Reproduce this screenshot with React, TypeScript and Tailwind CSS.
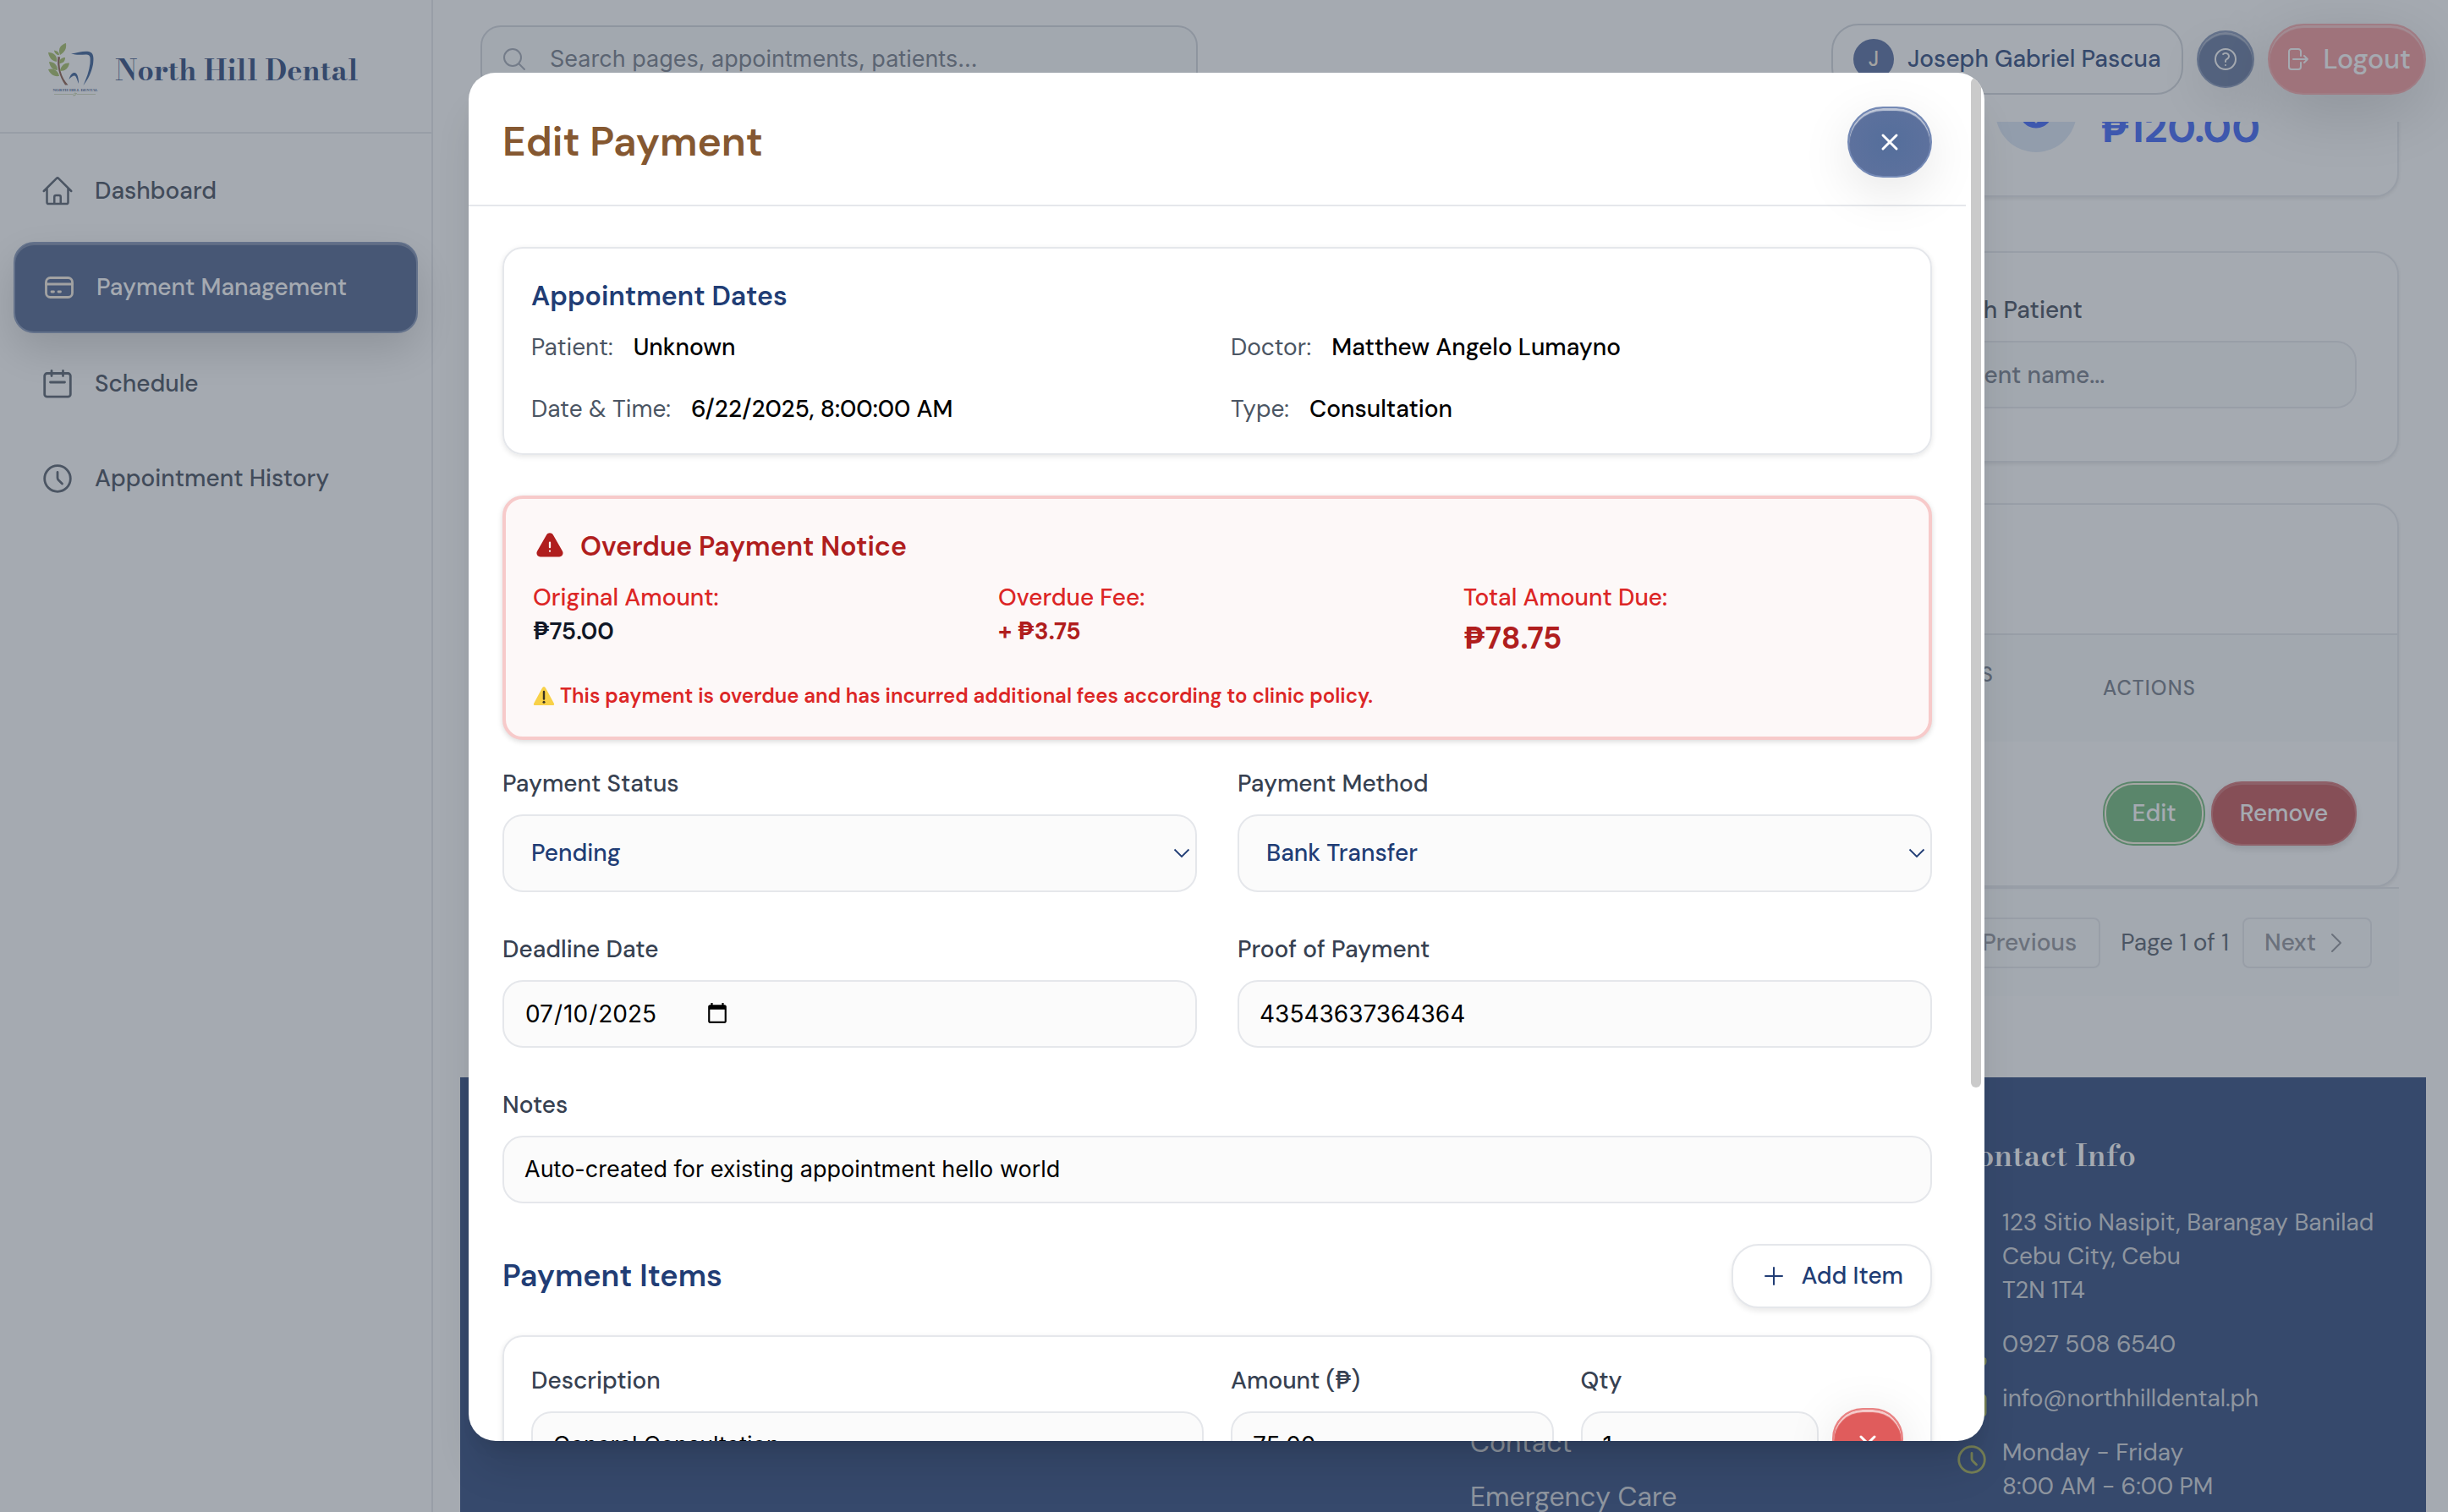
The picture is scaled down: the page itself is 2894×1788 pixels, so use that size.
import React from "react";
import {
  HiOutlineHome,
  HiOutlineMagnifyingGlass,
  HiOutlineQuestionMarkCircle,
  HiOutlineArrowRightOnRectangle,
  HiOutlineChevronRight,
  HiOutlinePlus,
  HiOutlinePhone,
  HiOutlineEnvelope,
  HiOutlineMapPin,
  HiExclamationTriangle,
  HiCurrencyDollar,
} from "react-icons/hi2";

const SERIF = "font-['Bodoni_Moda','Liberation_Serif',serif]";

function Logo() {
  return (
    <svg viewBox="16 10 60 66" className="h-[66px] w-[60px] shrink-0" aria-hidden="true">
      <path d="M28.5 27 C27 38 30 50 37 60.5 L40.5 60.5 C32 51 29 39 31 27.5 Z" fill="#84523f" />
      <g fill="#a0bb5c">
        <path d="M31 25 C28 17 32 13 38 11 C39 18 36 22 31 25 Z" />
        <path d="M27 33 C21 32 18 28 17 22 C24 22 28 26 27 33 Z" />
        <path d="M28 25 C26 24 24 22 24 19.5 C28 20 30 22 30 25 Z" />
        <path d="M28 43 C22 43 19 39 18 33 C24 33 28 37 28 43 Z" />
        <path d="M30 50 C23 51 19 47 17 42 C24 40 29 44 30 50 Z" />
        <path d="M30 35 C30 30 33 28 37 28 C37 33 34 35 30 35 Z" />
        <path d="M31 44 C32 37 37 34 42 34.500 C41 41 37 44 31 44 Z" />
      </g>
      <path d="M44 23.500 C52 22.500 58 20 65 21 C71 22 71 29 70 36 C68 46 64 54 58.500 61 C62 53 65.500 44 66.500 35 C67 28 67 24.500 62 24.500 C56 24.500 51 25.500 44 23.500 Z" fill="#2c548f" />
      <path d="M41.500 54 C43 48 46 45.500 48.500 46 C51.500 46.500 53 52 53 59 C51 54 50 49.500 48 49.500 C46 49.500 44 51 41.500 54 Z" fill="#2c548f" />
      <text x="22.500" y="68" fontSize="5" fontWeight="700" fontFamily="Liberation Serif" fill="#3d5a90">NORTH HILL DENTAL</text>
      <path d="M24 71.500 H46 M51 71.500 H73" stroke="#c6cfae" strokeWidth="0.800" />
      <path d="M46.500 72 q2 -3 4 -1.500 q-1 3 -4 2.500" fill="none" stroke="#b3c48a" strokeWidth="0.900" />
    </svg>
  );
}

function CardIcon() {
  return (
    <svg viewBox="0 0 40 40" fill="none" stroke="currentColor" strokeWidth="2.800" strokeLinecap="round" className="size-10 shrink-0" aria-hidden="true">
      <rect x="4.500" y="8.500" width="31" height="23" rx="5" />
      <path d="M4.500 16 H35.500 M11 25 H13.500 M19 25 H21.500" />
    </svg>
  );
}

function CalendarIcon() {
  return (
    <svg viewBox="0 0 40 40" fill="none" stroke="currentColor" strokeWidth="2.800" strokeLinecap="round" className="size-10 shrink-0" aria-hidden="true">
      <rect x="4.700" y="7.500" width="30.600" height="27.700" rx="3" />
      <path d="M13 4.500 V10.500 M26.500 4.500 V10.500 M11.500 18 H28.500" />
    </svg>
  );
}

function ClockIcon() {
  return (
    <svg viewBox="0 0 40 40" fill="none" stroke="currentColor" strokeWidth="2.800" strokeLinecap="round" className="size-10 shrink-0" aria-hidden="true">
      <circle cx="20" cy="20" r="15.300" />
      <path d="M20 12.500 V19 Q20 20.600 21.200 21.800 L25.500 26" />
    </svg>
  );
}

function NavItem({ icon, label, active }: { icon: React.ReactNode; label: string; active?: boolean }) {
  return (
    <a
      href="#"
      aria-current={active ? "page" : undefined}
      className={
        active
          ? "flex h-[108px] items-center gap-6 rounded-3xl border-2 border-[#7d8fb3] bg-[#435987] px-8 font-medium text-white shadow-[inset_0_2px_0_rgba(255,255,255,0.25),0_20px_50px_rgba(0,0,0,0.18)]"
          : "flex h-[104px] items-center gap-6 rounded-3xl px-8 font-medium text-[#374151]"
      }
    >
      <span className={active ? "text-[#f9efe1]" : "text-[#4b5563]"}>{icon}</span>
      {label}
    </a>
  );
}

function Sidebar() {
  return (
    <aside className="w-[512px] shrink-0 border-r-2 border-[#e5e7eb] bg-white">
      <div className="flex h-[158px] items-center gap-5 border-b-2 border-[#e5e7eb] pt-2.5 pl-14">
        <Logo />
        <span className={`${SERIF} text-[34px] leading-[48px] font-bold whitespace-nowrap text-[#213d75]`}>North Hill Dental</span>
      </div>
      <nav className="flex flex-col gap-2 p-4">
        <NavItem icon={<HiOutlineHome className="size-10" />} label="Dashboard" />
        <NavItem icon={<CardIcon />} label="Payment Management" active />
        <NavItem icon={<CalendarIcon />} label="Schedule" />
        <NavItem icon={<ClockIcon />} label="Appointment History" />
      </nav>
    </aside>
  );
}

function TopBar() {
  return (
    <header className="relative z-10 flex h-[144px] shrink-0 items-start justify-between pt-7 pr-[26px] pl-14">
      <label className="mt-0.5 flex h-20 w-[848px] items-center gap-[26px] rounded-3xl border-2 border-[#d1d5db] bg-[#f9fafb] px-[22px]">
        <HiOutlineMagnifyingGlass className="size-8 shrink-0 text-[#9ca3af]" />
        <span className="sr-only">Search</span>
        <input
          type="search"
          placeholder="Search pages, appointments, patients..."
          className="min-w-0 flex-1 bg-transparent font-['Inter',sans-serif] text-[27px] outline-none placeholder:text-[#6b7280]"
        />
      </label>
      <div className="flex items-center gap-4">
        <button type="button" className="flex h-[84px] items-center gap-4 rounded-[32px] border-2 border-[#d1d5db] bg-white px-6 font-medium text-[#213d75]">
          <span className="flex size-12 items-center justify-center rounded-full bg-[#4a629a] text-[24px] text-[#fdf3e0]">J</span>
          Joseph Gabriel Pascua
        </button>
        <button type="button" aria-label="Help" className="flex size-[68px] items-center justify-center rounded-full border-2 border-[#7d8fb3] bg-[#5b6f99] text-white shadow-[inset_0_3px_1px_rgba(255,255,255,0.45),0_20px_60px_rgba(0,0,0,0.12)]">
          <HiOutlineQuestionMarkCircle className="size-8" />
        </button>
        <button type="button" className="flex h-[84px] items-center gap-4 rounded-[42px] border-2 border-[#f5a3a5] bg-[#f29193] px-4 text-[32px] font-medium text-white shadow-[inset_0_3px_1px_rgba(255,255,255,0.45),0_20px_80px_rgba(0,0,0,0.2)]">
          <HiOutlineArrowRightOnRectangle className="size-8" />
          Logout
        </button>
      </div>
    </header>
  );
}

function Dashboard() {
  return (
    <div className="px-8">
      <div className="-mt-20 grid grid-cols-4 gap-8">
        <section className="col-start-4 flex items-end gap-7 rounded-[28px] border-2 border-[#e5e7eb] bg-white px-[62px] pt-[18px] pb-[51px] shadow-[0_2px_4px_rgba(0,0,0,0.1)]">
          <span className="flex size-24 items-center justify-center rounded-full bg-[#d9e4f5]">
            <HiCurrencyDollar className="size-12 text-[#315bf8]" />
          </span>
          <p className="text-[48px] leading-[56px] font-bold text-[#315bf8]">₱120.00</p>
        </section>
      </div>

      <section className="mt-16 grid grid-cols-4 gap-8 rounded-[28px] border-2 border-[#e5e7eb] bg-white px-12 pt-12 pb-[62px] shadow-[0_2px_4px_rgba(0,0,0,0.1)]">
        <label className="col-start-4 block font-medium text-[#374151]">
          Search Patient
          <input type="text" placeholder="Patient name..." className="mt-4 block h-20 w-full rounded-3xl border-2 border-[#e5e7eb] bg-[#f9fafb] px-6 font-medium placeholder:text-[#6b7280]" />
        </label>
      </section>

      <section className="mt-12 overflow-hidden rounded-[28px] border-2 border-[#e5e7eb] bg-white pt-[152px] shadow-[0_2px_4px_rgba(0,0,0,0.1)]">
        <table className="w-full table-fixed border-t-2 border-[#e5e7eb] text-left">
          <colgroup>
            <col />
            <col className="w-[220px]" />
            <col className="w-[396px]" />
          </colgroup>
          <thead className="bg-[#f9fafb] text-[24px] leading-8 font-medium tracking-wider text-[#6b7280] uppercase">
            <tr className="h-[127px]">
              <td />
              <th scope="col" className="px-12 font-medium">Status Date</th>
              <th scope="col" className="px-12 font-medium">Actions</th>
            </tr>
          </thead>
          <tbody>
            <tr className="h-[170px]">
              <td />
              <td />
              <td className="px-12">
                <div className="flex items-center justify-between font-medium text-white">
                  <button type="button" className="m-1 h-[68px] w-[113px] rounded-[32px] bg-[#69b773] ring-2 ring-[#69b773] ring-offset-2 ring-offset-[#fff8e5]">Edit</button>
                  <button type="button" className="h-[76px] w-[172px] rounded-[36px] border-2 border-[#d36b6d] bg-[#c1494b] shadow-[inset_0_2px_0_rgba(255,255,255,0.2),0_4px_8px_rgba(0,0,0,0.15)]">Remove</button>
                </div>
              </td>
            </tr>
          </tbody>
        </table>
      </section>

      <div className="flex h-[129px] items-center justify-end border-t-2 border-[#e5e7eb] bg-[#f9fafb]/60 px-8">
        <button type="button" disabled className="h-[60px] rounded-lg border-2 border-[#e5e7eb] px-[26px] font-medium text-[#8a8d94]">Previous</button>
        <span className="mr-4 ml-6 text-[#4b5563]">Page 1 of 1</span>
        <button type="button" disabled className="flex h-[60px] items-center gap-2 rounded-lg border-2 border-[#e5e7eb] px-6 font-medium text-[#8a8d94]">
          Next
          <HiOutlineChevronRight className="size-8" />
        </button>
      </div>
    </div>
  );
}

function ContactRow({ icon, children }: { icon: React.ReactNode; children: React.ReactNode }) {
  return (
    <li className="flex items-start gap-4">
      <span className="mt-2 -mb-2 shrink-0 text-[#9fa947]">{icon}</span>
      <span className="whitespace-nowrap">{children}</span>
    </li>
  );
}

function Footer() {
  return (
    <footer className="mt-24 grid grid-cols-4 gap-16 bg-[#213d75] px-12 pt-16 pb-20 text-[#d1d5db]">
      <ul className="col-start-3 mt-[344px] flex flex-col gap-4 text-[32px] leading-[48px]">
        <li><a href="#">Contact</a></li>
        <li><a href="#">Emergency Care</a></li>
      </ul>
      <section>
        <h3 className={`${SERIF} text-[36px] leading-[56px] font-semibold text-white`}>Contact Info</h3>
        <ul className="mt-8 flex flex-col gap-6">
          <ContactRow icon={<HiOutlineMapPin className="size-10" />}>
            123 Sitio Nasipit, Barangay Banilad<br />Cebu City, Cebu<br />T2N 1T4
          </ContactRow>
          <ContactRow icon={<HiOutlinePhone className="size-10" />}>0927 508 6540</ContactRow>
          <ContactRow icon={<HiOutlineEnvelope className="size-10" />}>info@northhilldental.ph</ContactRow>
          <ContactRow icon={<ClockIcon />}>
            Monday - Friday<br />8:00 AM - 6:00 PM
          </ContactRow>
        </ul>
      </section>
    </footer>
  );
}

function XIcon() {
  return (
    <svg viewBox="0 0 32 32" fill="none" stroke="currentColor" strokeWidth="3" strokeLinecap="round" className="size-8" aria-hidden="true">
      <path d="M8 8 L24 24 M24 8 L8 24" />
    </svg>
  );
}

function Detail({ label, value }: { label: string; value: string }) {
  return (
    <div className="flex gap-6 leading-[41px]">
      <dt className="text-[#4b5563]">{label}</dt>
      <dd className="font-medium text-black">{value}</dd>
    </div>
  );
}

const FIELD = "h-20 w-full rounded-3xl border-2 border-[#e5e7eb] bg-[#fbfbfb] px-6 font-['Inter',sans-serif] font-normal text-black";

function Field({ label, children }: { label: string; children: React.ReactNode }) {
  return (
    <label className="block min-w-0 flex-1 font-medium text-[#374151]">
      <span className="mb-4 block">{label}</span>
      {children}
    </label>
  );
}

function Select({ options }: { options: string[] }) {
  return (
    <span className="relative block">
      <select className="h-[92px] w-full appearance-none rounded-3xl border-2 border-[#e5e7eb] bg-[#fbfbfb] px-8 font-medium text-[#213d75]">
        {options.map((o) => (
          <option key={o}>{o}</option>
        ))}
      </select>
      <svg viewBox="0 0 20 12" fill="none" stroke="#213d75" strokeWidth="1.800" className="pointer-events-none absolute top-10 right-2 h-3 w-5" aria-hidden="true">
        <path d="M1.500 1.500 L10 10 L18.500 1.500" />
      </svg>
    </span>
  );
}

function WarningSign() {
  return (
    <svg viewBox="0 0 26 24" className="h-6 w-[26px] shrink-0" aria-hidden="true">
      <path d="M13 1 Q14.200 1 15 2.500 L25 21 Q25.800 23 24 23 H2 Q0.200 23 1 21 L11 2.500 Q11.800 1 13 1 Z" fill="#f8d148" />
      <path d="M13 7 V15.500" stroke="#3a3320" strokeWidth="2.400" strokeLinecap="round" />
      <circle cx="13" cy="19.300" r="1.500" fill="#3a3320" />
    </svg>
  );
}

function EditPaymentModal() {
  return (
    <div className="absolute inset-0 z-20 flex items-center justify-center bg-[#4b5563]/50 pt-0.5 pl-1.5">
      <div role="dialog" aria-modal="true" aria-labelledby="modal-title" className="relative h-[90.5vh] w-full max-w-[1792px] overflow-hidden rounded-[32px] bg-white shadow-[0_40px_50px_-10px_rgba(0,0,0,0.12),0_16px_20px_-12px_rgba(0,0,0,0.1)]">
        <div className="mr-[22px]">
          <div className="flex items-center justify-between border-b-2 border-[#e5e7eb] px-10 pt-10 pb-8">
            <h2 id="modal-title" className="text-[48px] leading-[64px] font-semibold text-[#855831]">Edit Payment</h2>
            <button type="button" aria-label="Close" className="flex h-[84px] w-[100px] items-center justify-center rounded-[42px] border-2 border-[#7489b5] bg-[radial-gradient(circle,#546e9b,#60729e)] text-white shadow-[inset_0_3px_1px_rgba(255,255,255,0.6),0_16px_60px_rgba(0,0,0,0.1)]">
              <XIcon />
            </button>
          </div>

          <div className="px-10 pt-12">
            <section className="rounded-3xl border-2 border-[#e5e7eb] p-8 shadow-[0_2px_6px_rgba(0,0,0,0.1)]">
              <h3 className="text-[32px] leading-[48px] font-semibold text-[#213d75]">Appointment Dates</h3>
              <dl className="mt-4 grid grid-cols-2 gap-8">
                <Detail label="Patient:" value="Unknown" />
                <Detail label="Doctor:" value="Matthew Angelo Lumayno" />
                <Detail label="Date & Time:" value="6/22/2025, 8:00:00 AM" />
                <Detail label="Type:" value="Consultation" />
              </dl>
            </section>

            <section className="mt-12 rounded-3xl border-4 border-[#f7caca] bg-[#fdf8f8] p-8 text-[#dc2626] shadow-[0_2px_6px_rgba(0,0,0,0.15)]">
              <h3 className="flex items-center gap-4 text-[32px] leading-[48px] font-semibold text-[#b01e1e]">
                <HiExclamationTriangle className="mx-0.5 size-9" />
                Overdue Payment Notice
              </h3>
              <dl className="mt-4 grid grid-cols-3 gap-8">
                <div>
                  <dt className="leading-[41px] font-medium">Original Amount:</dt>
                  <dd className="font-semibold text-[#111827]">₱75.00</dd>
                </div>
                <div>
                  <dt className="leading-[41px] font-medium">Overdue Fee:</dt>
                  <dd className="font-bold text-[#b01e1e]">+ ₱3.75</dd>
                </div>
                <div>
                  <dt className="leading-[41px] font-medium">Total Amount Due:</dt>
                  <dd className="text-[36px] leading-[56px] font-bold text-[#b01e1e]">₱78.75</dd>
                </div>
              </dl>
              <p className="mt-6 flex items-center gap-1.5 text-[24px] leading-8 font-semibold">
                <WarningSign />
                This payment is overdue and has incurred additional fees according to clinic policy.
              </p>
            </section>

            <form className="mt-8 flex flex-col gap-12">
              <div className="flex gap-12">
                <Field label="Payment Status"><Select options={["Pending", "Paid", "Overdue"]} /></Field>
                <Field label="Payment Method"><Select options={["Bank Transfer", "Cash"]} /></Field>
              </div>
              <div className="flex gap-12">
                <Field label="Deadline Date">
                  <input type="date" defaultValue="2025-07-10" className={`${FIELD} text-[28px] [&::-webkit-datetime-edit]:flex-none [&::-webkit-calendar-picker-indicator]:ml-0.5`} />
                </Field>
                <Field label="Proof of Payment"><input type="text" defaultValue="43543637364364" className={`${FIELD} text-[28px]`} /></Field>
              </div>
              <Field label="Notes"><input type="text" defaultValue="Auto-created for existing appointment hello world" className={`${FIELD} text-[27px]`} /></Field>

              <section>
                <div className="flex items-center justify-between">
                  <h3 className="text-[36px] leading-[56px] font-semibold text-[#213d75]">Payment Items</h3>
                  <button type="button" className="flex h-[76px] items-center gap-4 rounded-[32px] border-2 border-[#e5e7eb] bg-white px-8 font-medium text-[#213d75] shadow-[0_4px_6px_rgba(0,0,0,0.08)]">
                    <HiOutlinePlus className="size-8" />
                    Add Item
                  </button>
                </div>
                <div className="mt-8 grid grid-cols-12 gap-8 rounded-3xl border-2 border-[#e5e7eb] p-8 shadow-[0_2px_6px_rgba(0,0,0,0.1)]">
                  <div className="col-span-6">
                    <Field label="Description"><input type="text" defaultValue="General Consultation" className={`${FIELD} text-[27px]`} /></Field>
                  </div>
                  <div className="col-span-3">
                    <Field label="Amount (₱)"><input type="text" defaultValue="75.00" className={`${FIELD} text-[28px]`} /></Field>
                  </div>
                  <div className="col-span-3 flex items-end gap-4">
                    <Field label="Qty"><input type="text" defaultValue="1" className={`${FIELD} text-[28px]`} /></Field>
                    <button type="button" aria-label="Remove item" className="flex h-[84px] w-[84px] shrink-0 items-center justify-center rounded-[36px] border-2 border-[#e98384] bg-[#e05c5c] text-white shadow-[inset_0_3px_1px_rgba(255,255,255,0.7),0_8px_60px_rgba(0,0,0,0.1)]">
                      <XIcon />
                    </button>
                  </div>
                </div>
              </section>
            </form>
          </div>
        </div>
        <div className="absolute top-1.5 right-1 h-[73.8%] w-3 rounded-full bg-[#cacaca]" />
      </div>
    </div>
  );
}

export default function App() {
  return (
    <div className="relative flex h-screen overflow-hidden bg-white font-['DM_Sans','Inter',sans-serif] text-[28px] leading-10">
      <Sidebar />
      <div className="flex min-w-0 flex-1 flex-col">
        <TopBar />
        <main className="min-h-0 flex-1 overflow-hidden pr-[26px] pl-8">
          <Dashboard />
          <Footer />
        </main>
      </div>
      <EditPaymentModal />
    </div>
  );
}
